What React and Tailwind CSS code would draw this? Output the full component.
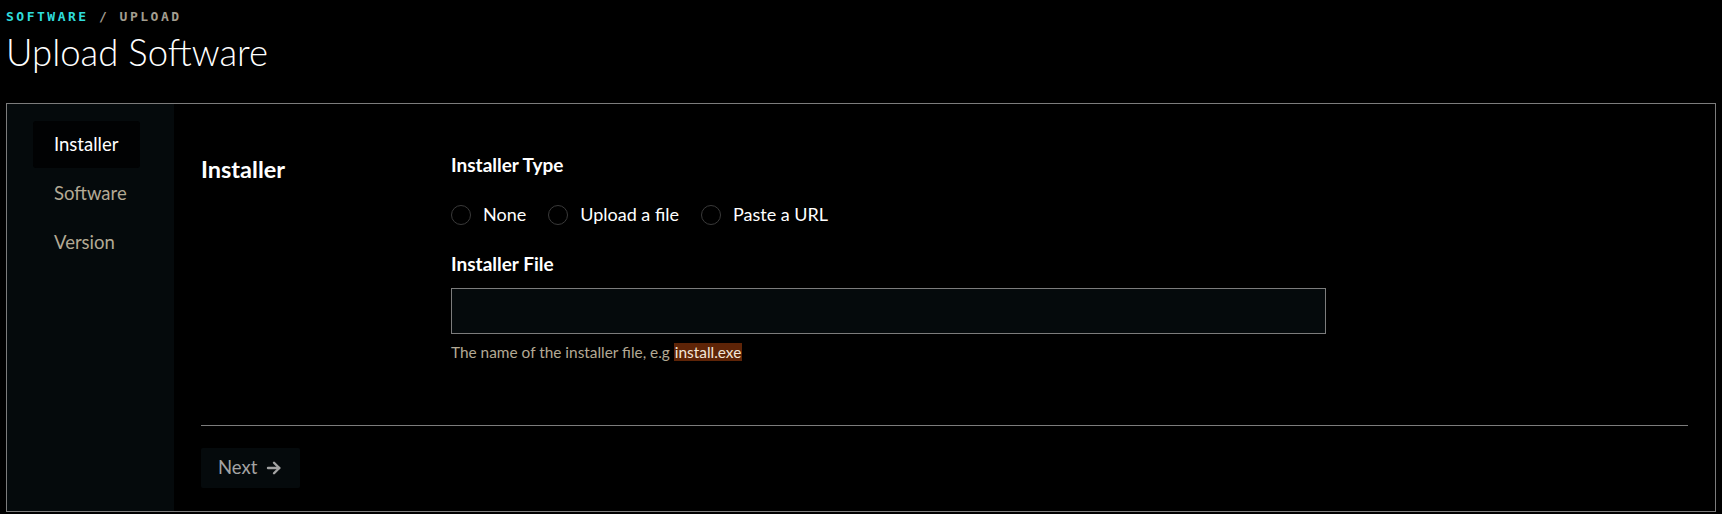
import React from 'react';

const steps = ['Installer', 'Software', 'Version'];
const installerTypes = ['None', 'Upload a file', 'Paste a URL'];

// Left-hand step list of the wizard
const StepNav = ({ active }) => (
  <nav className="w-[167px] shrink-0 bg-[#050a0c] pt-[17px] pl-[26px]">
    <ul className="flex flex-col gap-[2px]">
      {steps.map((step) => (
        <li
          key={step}
          className={`w-[107px] h-[47px] flex items-center pl-[21px] text-[18.5px] rounded-[3px] ${
            step === active ? 'bg-[#010203] text-white' : 'text-[#b3a994]'
          }`}
        >
          {step}
        </li>
      ))}
    </ul>
  </nav>
);

const Radio = ({ label }) => (
  <label className="flex items-center gap-[12px] cursor-pointer">
    <span className="w-[20px] h-[20px] rounded-full border border-[#3a3a3a] bg-black" />
    <span className="text-[18px] text-white">{label}</span>
  </label>
);

export default function App() {
  return (
    <div
      className="min-h-screen bg-black text-white"
      style={{ fontFamily: 'Lato, "Noto Sans", sans-serif' }}
    >
      {/* Header */}
      <div className="px-[6px] pt-[9px]">
        <div
          className="text-[13px] font-bold tracking-[2.5px] leading-[16px]"
          style={{ fontFamily: '"DejaVu Sans Mono", "Liberation Mono", monospace' }}
        >
          <span className="text-[#2fdcdc]">SOFTWARE</span>
          <span className="text-[#a39d8f]"> / UPLOAD</span>
        </div>
        <h1 className="text-[36.5px] font-light leading-[40px] mt-[7px]">Upload Software</h1>
      </div>

      {/* Wizard box */}
      <div className="mx-[6px] mt-[31px] h-[409px] border border-[#7c7c7c] flex">
        <StepNav active="Installer" />

        <div className="flex-1 px-[27px] flex flex-col">
          <div className="flex pt-[48px] h-[321px]">
            <h2 className="w-[250px] shrink-0 text-[23.5px] font-bold leading-[30px] mt-[2px]">
              Installer
            </h2>

            <div className="flex flex-col">
              <div className="text-[19px] font-bold leading-[24px] mt-[1px]">Installer Type</div>
              <div className="flex items-center gap-[22px] mt-[24px]">
                {installerTypes.map((t) => (
                  <Radio key={t} label={t} />
                ))}
              </div>

              <div className="text-[19px] font-bold leading-[24px] mt-[24px]">Installer File</div>
              <input
                type="text"
                className="mt-[12px] w-[875px] h-[46px] bg-[#050a0c] border border-[#7c7c7c] outline-none px-3 text-white"
              />
              <p className="mt-[8px] text-[15.4px] text-[#b3a994] leading-[20px]">
                The name of the installer file, e.g{' '}
                <span className="bg-[#5e2407] text-[#f3e6d8] px-[1px]">install.exe</span>
              </p>
            </div>
          </div>

          <div className="border-t border-[#7c7c7c]" />

          <div className="pt-[22px]">
            <button className="h-[40px] w-[99px] bg-[#050a0c] text-[#a3a3a3] text-[18.5px] flex items-center pl-[17px] gap-[8px] rounded-[2px]">
              Next
              <svg width="18" height="18" viewBox="0 0 24 24" fill="none" stroke="currentColor" strokeWidth="3.2" strokeLinecap="round" strokeLinejoin="round">
                <path d="M4 12h15" />
                <path d="M12 5l7 7-7 7" />
              </svg>
            </button>
          </div>
        </div>
      </div>
    </div>
  );
}
